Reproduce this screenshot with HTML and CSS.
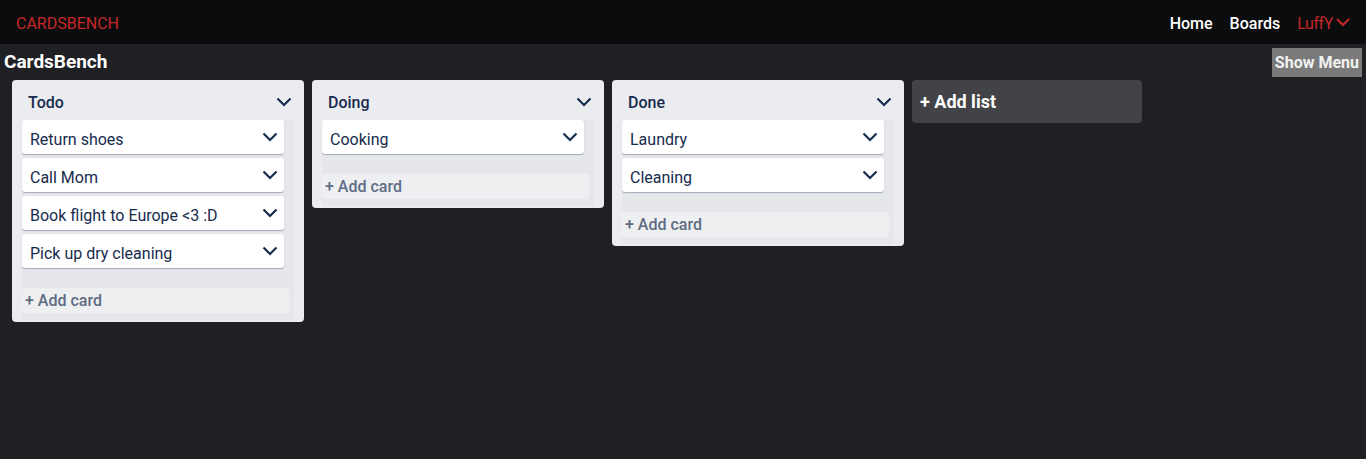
FILE: index.html
```html
<!DOCTYPE html>
<html>
<head>
<meta charset="utf-8">
<link rel="stylesheet" href="styles.css">
</head>
<body>
<nav class="navbar">
  <div class="logo">CARDSBENCH</div>
  <div class="nav-links">
    <a class="nav-link">Home</a>
    <a class="nav-link">Boards</a>
    <a class="nav-link user">LuffY<svg class="chev-user" width="16" height="10" viewBox="0 0 16 10"><polyline points="2,2 8,8 14,2" fill="none" stroke="#c62828" stroke-width="2"/></svg></a>
  </div>
</nav>
<div class="subheader">
  <h1 class="board-title">CardsBench</h1>
  <button class="show-menu">Show Menu</button>
</div>
<main class="board">
  <section class="list">
    <header class="list-header"><span>Todo</span><svg class="chev" width="16" height="10" viewBox="0 0 16 10"><polyline points="1.5,1.5 8,8 14.5,1.5" fill="none" stroke="#172b4d" stroke-width="2.2"/></svg></header>
    <div class="cards">
      <div class="card"><span>Return shoes</span><svg class="chev" width="16" height="10" viewBox="0 0 16 10"><polyline points="1.5,1.5 8,8 14.5,1.5" fill="none" stroke="#172b4d" stroke-width="2.2"/></svg></div>
      <div class="card"><span>Call Mom</span><svg class="chev" width="16" height="10" viewBox="0 0 16 10"><polyline points="1.5,1.5 8,8 14.5,1.5" fill="none" stroke="#172b4d" stroke-width="2.2"/></svg></div>
      <div class="card"><span>Book flight to Europe &lt;3 :D</span><svg class="chev" width="16" height="10" viewBox="0 0 16 10"><polyline points="1.5,1.5 8,8 14.5,1.5" fill="none" stroke="#172b4d" stroke-width="2.2"/></svg></div>
      <div class="card"><span>Pick up dry cleaning</span><svg class="chev" width="16" height="10" viewBox="0 0 16 10"><polyline points="1.5,1.5 8,8 14.5,1.5" fill="none" stroke="#172b4d" stroke-width="2.2"/></svg></div>
      <div class="add-card">+ Add card</div>
    </div>
  </section>
  <section class="list">
    <header class="list-header"><span>Doing</span><svg class="chev" width="16" height="10" viewBox="0 0 16 10"><polyline points="1.5,1.5 8,8 14.5,1.5" fill="none" stroke="#172b4d" stroke-width="2.2"/></svg></header>
    <div class="cards">
      <div class="card"><span>Cooking</span><svg class="chev" width="16" height="10" viewBox="0 0 16 10"><polyline points="1.5,1.5 8,8 14.5,1.5" fill="none" stroke="#172b4d" stroke-width="2.2"/></svg></div>
      <div class="add-card">+ Add card</div>
    </div>
  </section>
  <section class="list">
    <header class="list-header"><span>Done</span><svg class="chev" width="16" height="10" viewBox="0 0 16 10"><polyline points="1.5,1.5 8,8 14.5,1.5" fill="none" stroke="#172b4d" stroke-width="2.2"/></svg></header>
    <div class="cards">
      <div class="card"><span>Laundry</span><svg class="chev" width="16" height="10" viewBox="0 0 16 10"><polyline points="1.5,1.5 8,8 14.5,1.5" fill="none" stroke="#172b4d" stroke-width="2.2"/></svg></div>
      <div class="card"><span>Cleaning</span><svg class="chev" width="16" height="10" viewBox="0 0 16 10"><polyline points="1.5,1.5 8,8 14.5,1.5" fill="none" stroke="#172b4d" stroke-width="2.2"/></svg></div>
      <div class="add-card">+ Add card</div>
    </div>
  </section>
  <div class="add-list">+ Add list</div>
</main>
</body>
</html>
```
FILE: styles.css
```css
* { box-sizing: border-box; }
html, body { margin: 0; padding: 0; }
body {
  background: #1f2024;
  font-family: Roboto, "Liberation Sans", sans-serif;
  height: 459px;
  overflow: hidden;
}
.navbar {
  height: 44px;
  background: #0b0c0e;
  display: flex;
  align-items: center;
  justify-content: space-between;
  padding: 3px 15px 0 16px;
}
.logo {
  color: #c62828;
  font-size: 16px;
  font-weight: 400;
}
.nav-links {
  display: flex;
  align-items: center;
  gap: 17px;
}
.nav-link {
  color: #ffffff;
  font-size: 16px;
  font-weight: 500;
  cursor: pointer;
}
.nav-link.user {
  color: #c62828;
  font-weight: 400;
  letter-spacing: -0.4px;
  display: flex;
  align-items: center;
}
.chev-user { margin-left: 2px; margin-top: -3px; }
.subheader {
  display: flex;
  justify-content: space-between;
  align-items: flex-start;
  height: 36px;
  padding: 4px 4px 0 4px;
}
.board-title {
  margin: 0;
  color: #ffffff;
  font-size: 19px;
  font-weight: 700;
  line-height: 27px;
}
.show-menu {
  background: #7a7a7a;
  color: #f2f2f2;
  border: none;
  font-family: Roboto, "Liberation Sans", sans-serif;
  font-size: 16px;
  font-weight: 700;
  height: 29px;
  padding: 0 3px;
}
.board {
  display: flex;
  align-items: flex-start;
  gap: 8px;
  padding: 0 12px;
}
.list {
  width: 292px;
  background: #ebecf0;
  border-radius: 4px;
  padding: 0 10px 2px 10px;
}
.list-header {
  height: 40px;
  display: flex;
  align-items: center;
  justify-content: space-between;
  padding: 4px 2px 0 6px;
  color: #172b4d;
  font-size: 16px;
  font-weight: 500;
}
.cards {
  background: #e6e7eb;
  padding-bottom: 7px;
}
.card {
  width: 262px;
  height: 34px;
  background: #ffffff;
  border-radius: 3px;
  box-shadow: 0 1px 1px rgba(9, 30, 66, 0.3);
  margin-bottom: 4px;
  display: flex;
  align-items: center;
  justify-content: space-between;
  padding: 4px 6px 0 8px;
  color: #172b4d;
  font-size: 16px;
}
.card .chev { margin-top: -4px; }
.add-card {
  width: 267px;
  height: 25px;
  margin-top: 20px;
  background: #eeeff1;
  border-radius: 3px;
  color: #5e6c84;
  font-size: 16px;
  font-weight: 500;
  padding-left: 3px;
  line-height: 25px;
}
.add-list {
  width: 230px;
  height: 43px;
  background: #424347;
  border-radius: 4px;
  color: #ffffff;
  font-size: 18px;
  font-weight: 700;
  padding: 0 8px;
  line-height: 43px;
}
```
